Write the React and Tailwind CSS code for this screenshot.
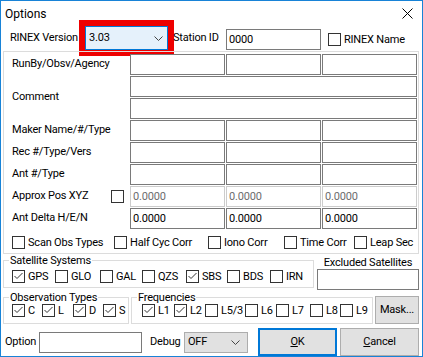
import React from 'react';

const Check = ({ checked }) => (
  <span className="w-[13px] h-[13px] border border-[#333333] bg-white flex items-center justify-center shrink-0">
    {checked && (
      <svg width="11" height="11" viewBox="0 0 11 11">
        <path d="M1.5 5 L4 7.5 L9.5 2" fill="none" stroke="#333333" strokeWidth="1" />
      </svg>
    )}
  </span>
);

const CheckItem = ({ label, checked, className = '' }) => (
  <div className={`flex items-center gap-[3px] h-[13px] ${className}`}>
    <Check checked={checked} />
    <span className="leading-[13px] whitespace-nowrap">{label}</span>
  </div>
);

const Field = ({ value = '', disabled, className = '' }) => (
  <div
    className={`h-[21px] bg-white border flex items-center px-[2px] leading-none ${
      disabled ? 'border-[#cccccc] text-[#6d6d6d]' : 'border-[#7a7a7a] text-black'
    } ${className}`}
  >
    {value}
  </div>
);

const Chevron = () => (
  <svg width="9" height="5" viewBox="0 0 9 5">
    <path d="M0.5 0.5 L4.5 4.5 L8.5 0.5" fill="none" stroke="#444444" strokeWidth="1" />
  </svg>
);

const Row = ({ label, children, extra }) => (
  <div className="flex h-[21px]">
    <div className="w-[126px] pl-[8px] pr-[6px] flex items-center justify-between">
      <span className="whitespace-nowrap">{label}</span>
      {extra}
    </div>
    <div className="flex gap-px">{children}</div>
  </div>
);

const Triple = ({ label, values = ['', '', ''], disabled, extra }) => (
  <Row label={label} extra={extra}>
    {values.map((v, i) => (
      <Field key={i} value={v} disabled={disabled} className="w-[95px]" />
    ))}
  </Row>
);

export default function App() {
  return (
    <div className="w-[423px] h-[357px] border border-[#1883d7] bg-white overflow-hidden text-[11px] tracking-[-0.2px] text-black font-['Roboto',sans-serif] flex flex-col">
      {/* title bar */}
      <div className="h-[25px] shrink-0 flex items-center justify-between pl-[4px] pr-[9px]">
        <span className="text-[12px] tracking-normal">Options</span>
        <svg width="11" height="11" viewBox="0 0 11 11">
          <path d="M0.5 0.5 L10.5 10.5 M10.5 0.5 L0.5 10.5" stroke="#000000" strokeWidth="1" />
        </svg>
      </div>

      {/* version row */}
      <div className="h-[24px] shrink-0 flex items-center pl-[9px]">
        <span className="w-[75px] whitespace-nowrap">RINEX Version</span>
        <div className="w-[83px] h-[24px] bg-[#e5f1fb] border border-[#0078d7] outline-[6px] outline-solid outline-[#ee0000] flex items-center justify-between pl-[3px] pr-[4px]">
          <span>3.03</span>
          <Chevron />
        </div>
        <span className="ml-[5px] w-[53px] whitespace-nowrap">Station ID</span>
        <Field value="0000" className="w-[95px] mt-[3px]" />
        <CheckItem label="RINEX Name" className="ml-[7px] mt-[3px]" />
      </div>

      {/* header frame */}
      <div className="ml-[2px] mt-[1px] w-[416px] shrink-0 border border-[#dcdcdc] pt-[2px] pb-[4px]">
        <div className="flex flex-col gap-px">
          <Triple label="RunBy/Obsv/Agency" />
          <div className="flex h-[43px]">
            <div className="w-[126px] pl-[8px] flex items-center">Comment</div>
            <div className="flex flex-col gap-px">
              <Field className="w-[287px]" />
              <Field className="w-[287px]" />
            </div>
          </div>
          <Triple label="Maker Name/#/Type" />
          <Triple label="Rec #/Type/Vers" />
          <Triple label="Ant #/Type" />
          <Triple
            label="Approx Pos XYZ"
            values={['0.0000', '0.0000', '0.0000']}
            disabled
            extra={<Check />}
          />
          <Triple label="Ant Delta H/E/N" values={['0.0000', '0.0000', '0.0000']} />
        </div>
        <div className="flex mt-[7px] pl-[8px]">
          <CheckItem label="Scan Obs Types" className="w-[102px]" />
          <CheckItem label="Half Cyc Corr" className="w-[94px]" />
          <CheckItem label="Iono Corr" className="w-[76px]" />
          <CheckItem label="Time Corr" className="w-[70px]" />
          <CheckItem label="Leap Sec" />
        </div>
      </div>

      {/* satellite systems + excluded */}
      <div className="flex items-start shrink-0">
        <fieldset className="ml-[2px] w-[311px] border border-[#dcdcdc] pb-[4px]">
          <legend className="ml-[5px] px-[1px] leading-[13px]">Satellite Systems</legend>
          <div className="flex mt-[3px] pl-[8px]">
            <CheckItem label="GPS" checked className="w-[43px]" />
            <CheckItem label="GLO" className="w-[45px]" />
            <CheckItem label="GAL" className="w-[42px]" />
            <CheckItem label="QZS" className="w-[44px]" />
            <CheckItem label="SBS" checked className="w-[41px]" />
            <CheckItem label="BDS" className="w-[43px]" />
            <CheckItem label="IRN" />
          </div>
        </fieldset>
        <div className="ml-[3px] w-[102px] flex flex-col">
          <span className="mt-[2px] leading-[13px] text-center whitespace-nowrap">Excluded Satellites</span>
          <Field className="w-[102px]" />
        </div>
      </div>

      {/* observation types + frequencies + mask */}
      <div className="flex items-start mt-[1px] shrink-0">
        <fieldset className="ml-[2px] w-[126px] border border-[#dcdcdc] pb-[6px]">
          <legend className="ml-[5px] px-[1px] leading-[13px]">Observation Types</legend>
          <div className="flex pl-[8px]">
            <CheckItem label="C" checked className="w-[30px]" />
            <CheckItem label="L" checked className="w-[31px]" />
            <CheckItem label="D" checked className="w-[30px]" />
            <CheckItem label="S" checked />
          </div>
        </fieldset>
        <fieldset className="ml-[2px] w-[242px] border border-[#dcdcdc] pb-[6px]">
          <legend className="ml-[5px] px-[1px] leading-[13px]">Frequencies</legend>
          <div className="flex pl-[10px]">
            <CheckItem label="L1" checked className="w-[32px]" />
            <CheckItem label="L2" checked className="w-[31px]" />
            <CheckItem label="L5/3" className="w-[40px]" />
            <CheckItem label="L6" className="w-[31px]" />
            <CheckItem label="L7" className="w-[34px]" />
            <CheckItem label="L8" className="w-[30px]" />
            <CheckItem label="L9" />
          </div>
        </fieldset>
        <button className="ml-[2px] mt-[5px] w-[44px] h-[28px] bg-[#e1e1e1] border border-[#adadad] flex items-center justify-center whitespace-nowrap">
          Mask...
        </button>
      </div>

      {/* bottom row */}
      <div className="flex items-center h-[28px] mt-[4px] pl-[4px] shrink-0">
        <span className="w-[34px]">Option</span>
        <Field className="w-[103px]" />
        <span className="ml-[8px] w-[34px]">Debug</span>
        <div className="w-[64px] h-[21px] bg-[#e1e1e1] border border-[#adadad] flex items-center justify-between pl-[3px] pr-[7px]">
          <span>OFF</span>
          <Chevron />
        </div>
        <button className="ml-[10px] w-[79px] h-[28px] bg-[#e1e1e1] border-2 border-[#0078d7] flex items-center justify-center">
          <span><span className="underline">O</span>K</span>
        </button>
        <button className="ml-[3px] w-[79px] h-[28px] bg-[#e1e1e1] border border-[#adadad] flex items-center justify-center">
          <span><span className="underline">C</span>ancel</span>
        </button>
      </div>
    </div>
  );
}
